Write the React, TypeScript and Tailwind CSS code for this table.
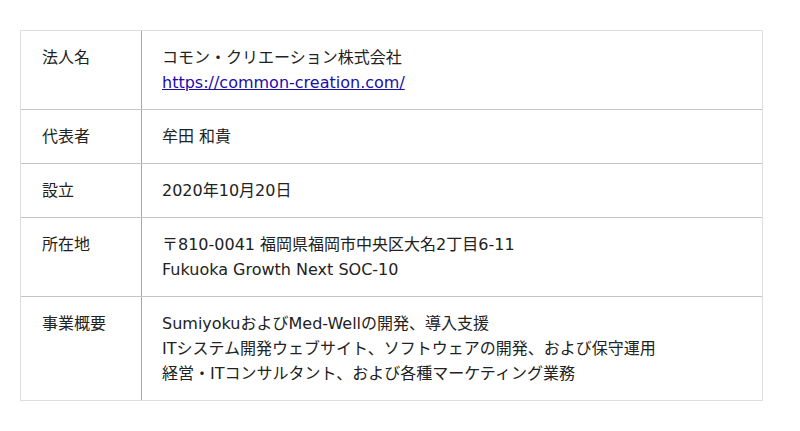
import React from 'react'

// Company profile table

type Row = {
    label: string
    lines: React.ReactNode[]
}

const rows: Row[] = [
    {
        label: '法人名',
        lines: [
            'コモン・クリエーション株式会社',
            <a key="url" href="https://common-creation.com/" className="text-[#1a0dab] underline">
                https://common-creation.com/
            </a>,
        ],
    },
    { label: '代表者', lines: ['牟田 和貴'] },
    { label: '設立', lines: ['2020年10月20日'] },
    {
        label: '所在地',
        lines: ['〒810-0041 福岡県福岡市中央区大名2丁目6-11', 'Fukuoka Growth Next SOC-10'],
    },
    {
        label: '事業概要',
        lines: [
            'SumiyokuおよびMed-Wellの開発、導入支援',
            'ITシステム開発ウェブサイト、ソフトウェアの開発、および保守運用',
            '経営・ITコンサルタント、および各種マーケティング業務',
        ],
    },
]

const App = () => {
    return (
        <div
            className="min-h-[431px] bg-white pt-[30px] px-[20px] text-[16px] leading-[25px] text-[#222]"
            style={{ fontFamily: '"DejaVu Sans", "Noto Sans CJK JP", sans-serif' }}
        >
            <div className="w-[743px] border border-[#dedede]">
                {rows.map((row, i) => (
                    <div
                        key={row.label}
                        className={`flex ${i < rows.length - 1 ? 'border-b border-[#c4c4c4]' : ''}`}
                    >
                        <div className="w-[121px] shrink-0 border-r border-[#a8a8a8] pl-[21px] py-[14px]">
                            {row.label}
                        </div>
                        <div className="flex-1 pl-[20px] py-[14px]">
                            {row.lines.map((line, j) => (
                                <div key={j}>{line}</div>
                            ))}
                        </div>
                    </div>
                ))}
            </div>
        </div>
    )
}

export default App
